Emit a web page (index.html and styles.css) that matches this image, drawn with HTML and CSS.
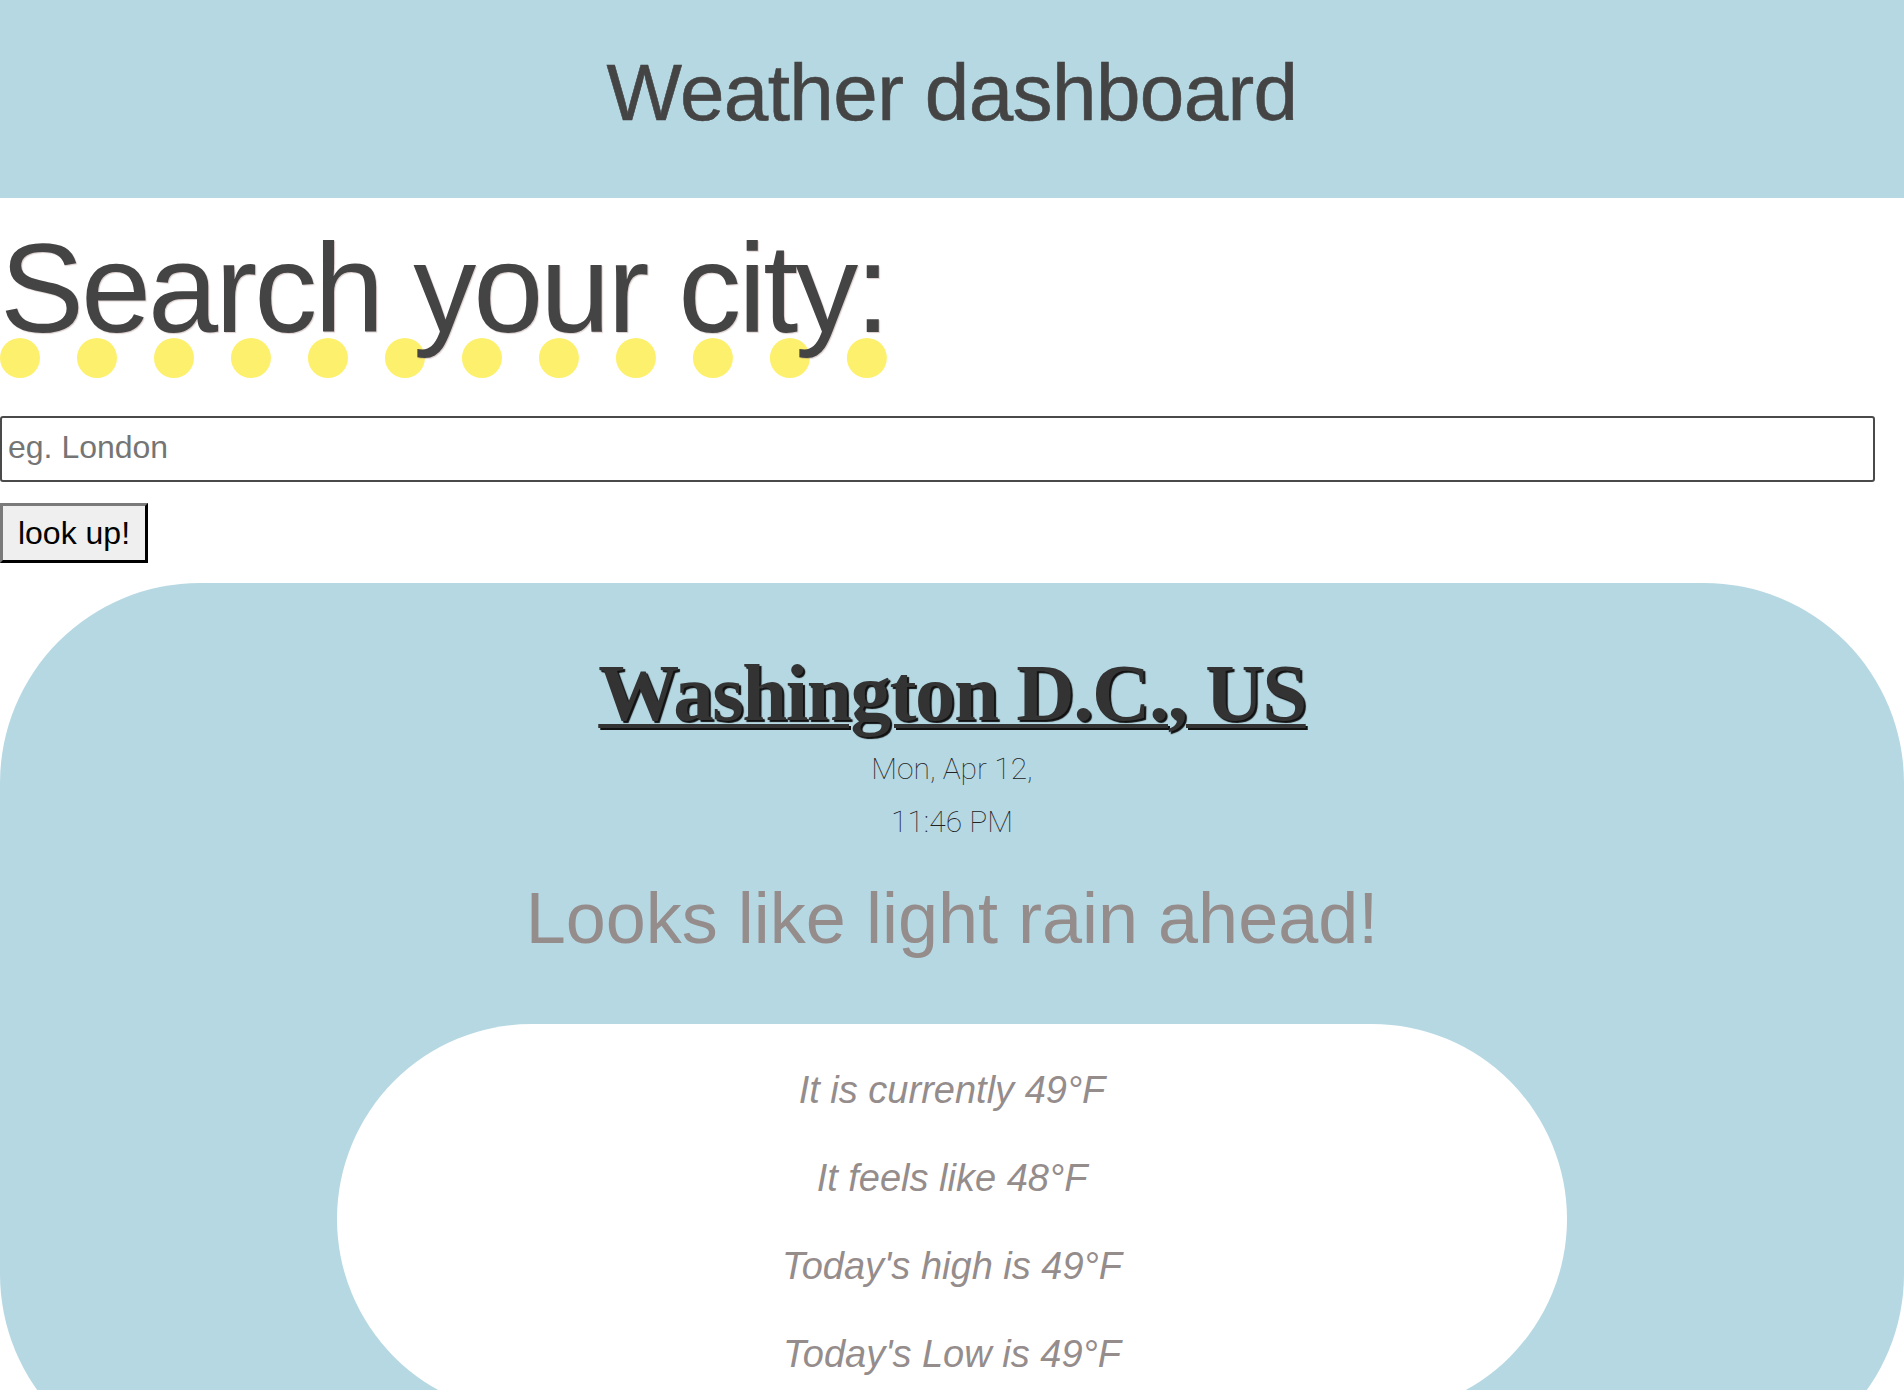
FILE: index.html
```html
<!DOCTYPE html>
<html lang="en">
<head>
<meta charset="utf-8">
<title>Weather dashboard</title>
<link rel="stylesheet" href="styles.css">
</head>
<body>
<header class="top">
  <h1 class="top-title">Weather dashboard</h1>
</header>
<main>
  <h2 class="search-title"><span class="search-text">Search your city:</span></h2>
  <form class="search-form">
    <input class="city-input" type="text" placeholder="eg. London">
    <button class="lookup-btn" type="button">look up!</button>
  </form>
  <section class="card">
    <h2 class="city">Washington D.C., US</h2>
    <div class="date">Mon, Apr 12,<br>11:46 PM</div>
    <h3 class="summary">Looks like light rain ahead!</h3>
    <div class="temps">
      <p class="temp">It is currently 49°F</p>
      <p class="temp">It feels like 48°F</p>
      <p class="temp">Today's high is 49°F</p>
      <p class="temp">Today's Low is 49°F</p>
    </div>
  </section>
</main>
</body>
</html>
```
FILE: styles.css
```css
html, body {
  margin: 0;
  padding: 0;
  background: #ffffff;
}
body {
  font-family: "Liberation Sans", Arial, sans-serif;
  color: #444444;
}
.top {
  background: #b6d8e3;
  height: 198px;
  box-sizing: border-box;
  padding-top: 53px;
  text-align: center;
}
.top-title {
  margin: 0;
  font-size: 80px;
  line-height: 80px;
  font-weight: 400;
  color: #444444;
  letter-spacing: -0.6px;
  -webkit-text-stroke: 0.6px #444444;
}
.search-title {
  margin: 41px 0 0 0;
  font-size: 126px;
  font-weight: 400;
  line-height: 99px;
}
.search-text {
  display: inline-block;
  line-height: 99px;
  letter-spacing: -3px;
  color: #444444;
  border-bottom: 40px dotted #fdf06d;
  text-shadow: 1px 1px 1px rgba(150, 110, 110, 0.35);
}
.search-form {
  margin: 38px 0 0 0;
}
.city-input {
  display: block;
  box-sizing: border-box;
  width: 98.5%;
  height: 66px;
  margin: 0;
  padding: 0 6px 4px;
  border: 2px solid #4a4a4a;
  border-radius: 3px;
  font-family: "Liberation Sans", Arial, sans-serif;
  font-size: 32px;
  color: #222;
  background: #fff;
}
.city-input::placeholder {
  color: #757575;
}
.lookup-btn {
  display: block;
  margin-top: 21px;
  box-sizing: border-box;
  width: 148px;
  height: 60px;
  padding: 0;
  border: 3px outset #767676;
  border-top-color: #7a7a7a;
  border-left-color: #7a7a7a;
  border-right-color: #222;
  border-bottom-color: #222;
  background: #efefef;
  font-family: "Liberation Sans", Arial, sans-serif;
  font-size: 32px;
  color: #000;
}
.card {
  margin-top: 20px;
  background: #b6d8e3;
  border-radius: 200px;
  padding: 64px 0 60px;
  text-align: center;
}
.city {
  margin: 0;
  font-family: "Liberation Serif", "Times New Roman", serif;
  font-weight: 700;
  font-size: 81px;
  line-height: 92px;
  letter-spacing: -1.5px;
  color: #333333;
  text-decoration: underline;
  text-decoration-thickness: 4px;
  text-underline-offset: 4px;
  text-shadow: 2px 2px 1px #111;
}
.date {
  margin-top: 3px;
  font-family: Roboto, "Liberation Sans", sans-serif;
  font-weight: 100;
  font-size: 30px;
  line-height: 53px;
  color: #222;
}
.summary {
  margin: 28px 0 0;
  font-size: 72px;
  line-height: 84px;
  font-weight: 400;
  color: #958c8c;
}
.temps {
  width: 1230px;
  height: 390px;
  margin: 64px auto 0;
  box-sizing: border-box;
  padding-top: 3px;
  background: #ffffff;
  border-radius: 200px;
  overflow: hidden;
}
.temp {
  margin: 38px 0;
  font-size: 38px;
  line-height: 50px;
  font-style: italic;
  color: #958c8c;
}
```
